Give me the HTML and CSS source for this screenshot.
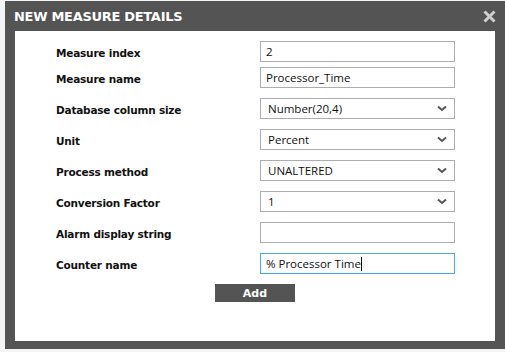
FILE: index.html
```html
<!DOCTYPE html>
<html lang="en">
<head>
    <meta charset="UTF-8">
    <title>New Measure Details</title>
    <link rel="stylesheet" href="styles.css">
</head>
<body>
    <!-- Finestra di dialogo -->
    <div class="dialog">
        <div class="dialog-title">
            <span>NEW MEASURE DETAILS</span>
            <svg class="close" width="13" height="13" viewBox="0 0 13 13">
                <path d="M1.5 1.5 L11.5 11.5 M11.5 1.5 L1.5 11.5" stroke="#cfcfcf" stroke-width="3" fill="none"/>
            </svg>
        </div>
        <div class="dialog-body">
            <div class="row first">
                <label>Measure index</label>
                <div class="field">2</div>
            </div>
            <div class="row tight">
                <label>Measure name</label>
                <div class="field">Processor_Time</div>
            </div>
            <div class="row">
                <label>Database column size</label>
                <div class="field select"><span>Number(20,4)</span><svg width="10" height="7" viewBox="0 0 10 7"><path d="M1 1.5 L5 5 L9 1.5" stroke="#555" stroke-width="2" fill="none"/></svg></div>
            </div>
            <div class="row">
                <label>Unit</label>
                <div class="field select"><span>Percent</span><svg width="10" height="7" viewBox="0 0 10 7"><path d="M1 1.5 L5 5 L9 1.5" stroke="#555" stroke-width="2" fill="none"/></svg></div>
            </div>
            <div class="row">
                <label>Process method</label>
                <div class="field select"><span>UNALTERED</span><svg width="10" height="7" viewBox="0 0 10 7"><path d="M1 1.5 L5 5 L9 1.5" stroke="#555" stroke-width="2" fill="none"/></svg></div>
            </div>
            <div class="row">
                <label>Conversion Factor</label>
                <div class="field select"><span>1</span><svg width="10" height="7" viewBox="0 0 10 7"><path d="M1 1.5 L5 5 L9 1.5" stroke="#555" stroke-width="2" fill="none"/></svg></div>
            </div>
            <div class="row">
                <label>Alarm display string</label>
                <div class="field"></div>
            </div>
            <div class="row">
                <label>Counter name</label>
                <div class="field focused">% Processor Time<span class="caret"></span></div>
            </div>
            <div class="actions">
                <button class="btn">Add</button>
            </div>
        </div>
    </div>
</body>
</html>
```

FILE: styles.css
```css
body {
    margin: 0;
    padding: 1px 0 0 5px;
    background-color: #f4f4f4;
    font-family: Tahoma, "DejaVu Sans", sans-serif;
}

.dialog {
    width: 500px;
    height: 348px;
    background-color: #545454;
    display: flex;
    flex-direction: column;
}

.dialog-title {
    height: 30px;
    display: flex;
    align-items: center;
    justify-content: space-between;
    padding: 0 9px 0 9px;
    color: #fff;
    font-weight: bold;
    font-size: 13px;
}

.dialog-title span {
    letter-spacing: -0.3px;
    margin-top: 1px;
}

.close {
    margin-top: 1px;
}

.dialog-body {
    background-color: #fff;
    margin: 0 10px 8px 10px;
    flex: 1;
    padding: 10px 0 0 0;
}

.row {
    display: grid;
    grid-template-columns: 204px 195px;
    align-items: center;
    padding-left: 41px;
    margin-top: 10px;
}

.row.first {
    margin-top: 0;
}

.row.tight {
    margin-top: 5px;
}

label {
    font-weight: bold;
    font-size: 10.5px;
    color: #111;
    letter-spacing: -0.2px;
    padding-top: 2px;
}

.field {
    box-sizing: border-box;
    height: 21px;
    border: 1px solid #abadb3;
    font-family: "Open Sans", sans-serif;
    font-size: 11.5px;
    color: #111;
    padding: 0 5px;
    display: flex;
    align-items: center;
}

.select {
    justify-content: space-between;
    padding: 0 7px 0 7px;
}

.focused {
    border-color: #45ace0;
}

.caret {
    display: inline-block;
    width: 1px;
    height: 14px;
    background-color: #000;
}

.actions {
    display: flex;
    justify-content: center;
    margin-top: 10px;
}

.btn {
    width: 80px;
    height: 18px;
    border: none;
    background-color: #545454;
    color: #fff;
    font-family: Tahoma, "DejaVu Sans", sans-serif;
    font-weight: bold;
    font-size: 11px;
    padding: 0;
}
```
